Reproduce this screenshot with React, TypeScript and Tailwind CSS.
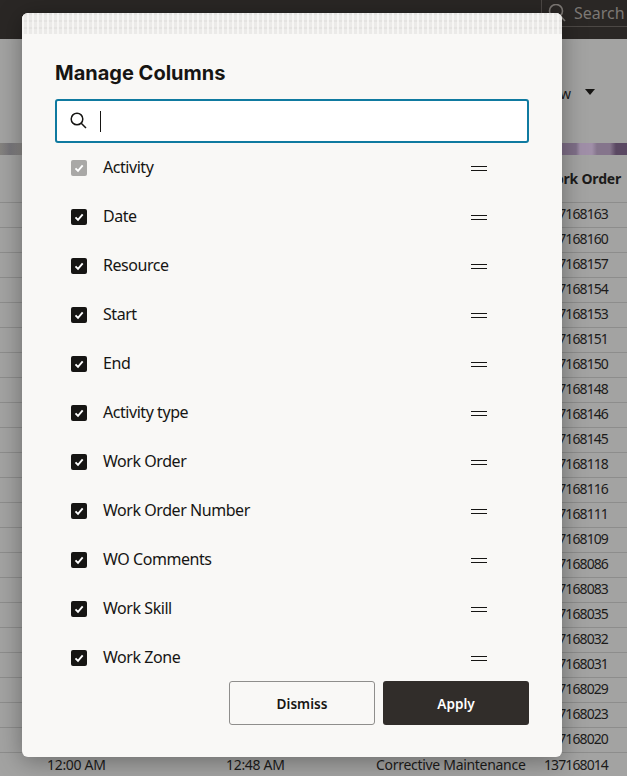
import React from "react";

const columns = [
  "Date",
  "Resource",
  "Start",
  "End",
  "Activity type",
  "Work Order",
  "Work Order Number",
  "WO Comments",
  "Work Skill",
  "Work Zone",
];

const orderNumbers = [
  "137168163", "137168160", "137168157", "137168154", "137168153", "137168151",
  "137168150", "137168148", "137168146", "137168145", "137168118", "137168116",
  "137168111", "137168109", "137168086", "137168083", "137168035", "137168032",
  "137168031", "137168029", "137168023", "137168020",
];

function CheckMark() {
  return (
    <svg width="12" height="12" viewBox="0 0 12 12" fill="none">
      <path d="M2.5 6.3 L5 8.8 L9.7 3.4" stroke="white" strokeWidth="1.9" />
    </svg>
  );
}

function ColumnRow({ label, disabled }: { label: string; disabled?: boolean }) {
  return (
    <div className="flex h-[49px] shrink-0 items-center pl-4 pr-[42px]">
      <span
        className={`flex h-4 w-4 items-center justify-center rounded-[2px] ${
          disabled ? "bg-[#a9a8a6]" : "bg-[#161513]"
        }`}
      >
        <CheckMark />
      </span>
      <span className="ml-4 flex-1 pb-[2px] text-base tracking-[-0.45px] text-[#161513]">{label}</span>
      <span className="mt-[2px] flex w-4 flex-col gap-[3px]">
        <span className="h-px bg-[#161513]" />
        <span className="h-px bg-[#161513]" />
      </span>
    </div>
  );
}

export default function App() {
  return (
    <div className="relative h-[776px] w-[627px] overflow-hidden bg-[#a3a3a2] font-['Noto_Sans','Open_Sans',sans-serif] text-[#1c1b1a]">
      {/* page behind the dialog */}
      <header className="flex h-[39px] items-start justify-end bg-[#2a2725]">
        <div className="flex h-[27px] w-[86px] items-center gap-2 rounded-bl-[4px] border-b border-l border-[#4c4845] pl-[6px] text-base text-[#7c7874]">
          <svg width="18" height="18" viewBox="0 0 18 18" fill="none" stroke="#7c7874" strokeWidth="1.6">
            <circle cx="8" cy="7" r="6.5" />
            <path d="M12.5 12 L17 17" />
          </svg>
          Search
        </div>
      </header>
      <div className="flex h-[104px] items-center justify-end pr-[32px] pt-[5px]">
        <span className="mr-[14px] text-sm">View</span>
        <span className="mb-[3px] h-0 w-0 border-x-[5px] border-t-[6px] border-x-transparent border-t-[#161513]" />
      </div>
      <div className="h-[12px] bg-[linear-gradient(90deg,#85837f_0px,#77757a_10px,#8b8986_22px,#a3a3a2_30px,#a3a3a2_555px,#7f6f88_562px,#7f6f88_576px,#a08fa8_580px,#a08fa8_592px,#85758c_597px,#85758c_610px,#5a4862_616px,#5a4862_627px)]" />
      <div className="flex h-[48px] items-center justify-end border-b border-[#8d8d8c] pr-[6px] text-sm font-bold tracking-[-0.2px]">
        Work Order
      </div>
      {orderNumbers.map((num) => (
        <div key={num} className="flex h-[25px] items-center border-b border-[#8d8d8c] pb-[2px] pl-[544px] text-sm tracking-[-0.9px]">
          {num}
        </div>
      ))}
      <div className="flex h-[25px] items-center pb-[2px] text-sm tracking-[-0.3px]">
        <span className="ml-[47px] w-[179px]">12:00 AM</span>
        <span className="w-[150px]">12:48 AM</span>
        <span className="w-[168px]">Corrective Maintenance</span>
        <span className="tracking-[-0.9px]">137168014</span>
      </div>

      {/* dialog */}
      <div className="absolute left-[22px] top-[13px] flex h-[744px] w-[540px] flex-col overflow-hidden rounded-[6px] bg-[#f9f8f6] shadow-[0_4px_24px_rgba(0,0,0,0.35)]">
        <div className="h-[21px] shrink-0 bg-[repeating-linear-gradient(90deg,rgba(249,248,246,0.8)_0px,rgba(249,248,246,0.8)_2px,transparent_2px,transparent_5px),repeating-linear-gradient(0deg,#ebeae8_0px,#ebeae8_5px,#e4e3e1_5px,#e4e3e1_7px)]" />
        <div className="flex min-h-0 flex-1 flex-col px-[33px] pb-8">
          <h1 className="mt-[26px] font-['Inter',sans-serif] text-[20px] font-bold leading-[26px] text-[#161513]">Manage Columns</h1>
          <div className="mt-[13px] flex h-11 shrink-0 items-center gap-[12px] rounded-[3px] border-2 border-[#0f7aa0] bg-white pl-[13px]">
            <svg width="18" height="18" viewBox="0 0 18 18" fill="none" stroke="#161513" strokeWidth="1.5">
              <circle cx="7" cy="7" r="5.8" />
              <path d="M11.2 11.2 L16 16" />
            </svg>
            <span className="h-[21px] w-px bg-[#161513]" />
          </div>
          <div className="flex min-h-0 flex-1 flex-col overflow-hidden">
            <ColumnRow label="Activity" disabled />
            {columns.map((label) => (
              <ColumnRow key={label} label={label} />
            ))}
          </div>
          <div className="mt-[10px] flex shrink-0 justify-end gap-2">
            <button className="h-11 w-[146px] rounded-[3px] border border-[#8f8e8c] pt-[2px] text-[13.6px] font-semibold text-[#161513]">
              Dismiss
            </button>
            <button className="h-11 w-[146px] rounded-[3px] bg-[#312d2a] pt-[2px] text-[13.6px] font-semibold text-white">
              Apply
            </button>
          </div>
        </div>
      </div>
    </div>
  );
}
